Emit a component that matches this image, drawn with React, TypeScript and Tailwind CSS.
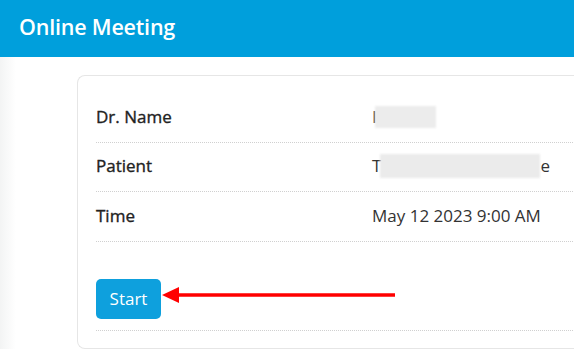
import React from "react";

export default function App() {
  return (
    <div
      className="relative h-[360px] w-[574px] overflow-hidden bg-white text-[#222]"
      style={{ fontFamily: "'Open Sans', 'Liberation Sans', sans-serif" }}
    >
      <header className="flex h-[57px] items-center bg-[#009fdc] pb-[2px] pl-[19px]">
        <h1 className="text-[21.5px] font-semibold tracking-[-0.2px] text-white">Online Meeting</h1>
      </header>

      <div className="flex">
        <div className="w-[16px] shrink-0 bg-gradient-to-r from-[#f3f4f4] to-white" />
        <div className="pl-[61px] pt-[18px]">
          <div className="w-[600px] rounded-l-[8px] border border-r-0 border-[#e6e6e6] pl-[18px] pt-[18px] pb-[17px]">
            <div className="flex h-[49px] items-center border-b border-dotted border-[#d0d0d0] pb-[3px]">
              <span className="w-[276px] text-[17px] [-webkit-text-stroke:0.35px_#222]">Dr. Name</span>
              <span className="flex items-center text-[17px] text-[#333]">
                I<span className="ml-[-2px] h-[22px] w-[61px] bg-[#ececec] blur-[1px]" />
              </span>
            </div>
            <div className="flex h-[49px] items-center border-b border-dotted border-[#d0d0d0] pb-[2px]">
              <span className="w-[276px] text-[17px] [-webkit-text-stroke:0.35px_#222]">Patient</span>
              <span className="flex items-center text-[17px] text-[#333]">
                T<span className="ml-[-1px] h-[24px] w-[160px] bg-[#ebebeb] blur-[1px]" />e
              </span>
            </div>
            <div className="flex h-[50px] items-center border-b border-dotted border-[#d0d0d0] pb-[2px]">
              <span className="w-[276px] text-[17px] [-webkit-text-stroke:0.35px_#222]">Time</span>
              <span className="text-[17px] text-[#333]">May 12 2023 9:00 AM</span>
            </div>
            <div className="flex h-[89px] items-start border-b border-dotted border-[#d0d0d0] pt-[37px]">
              <button className="h-[40px] w-[65px] rounded-[5px] bg-[#0ea0dd] pb-[1px] text-[17px] text-white">
                Start
              </button>
            </div>
          </div>
        </div>
      </div>

      <svg className="absolute left-[160px] top-[284px]" width="240" height="22" viewBox="0 0 240 22">
        <line x1="14" y1="11" x2="235" y2="11" stroke="#ff0000" strokeWidth="3.5" />
        <polygon points="2,11 19,3 19,19" fill="#ff0000" />
      </svg>
    </div>
  );
}
